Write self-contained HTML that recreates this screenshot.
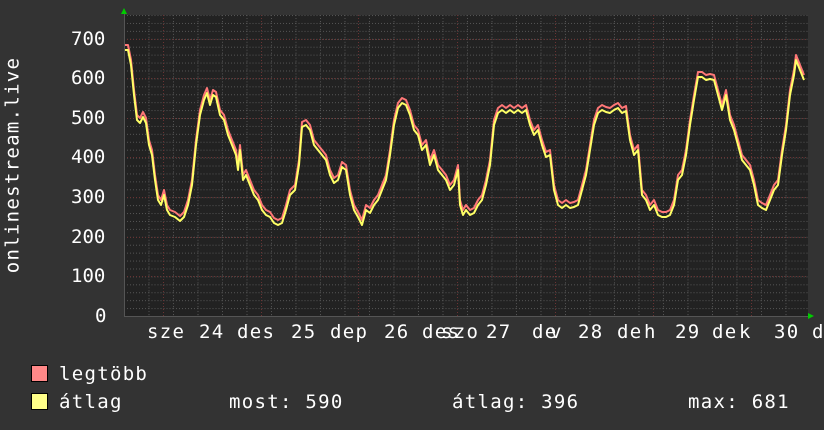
<!DOCTYPE html>
<html><head><meta charset="utf-8"><style>
body{margin:0;width:824px;height:430px;background:#333;overflow:hidden;position:relative;font-family:"DejaVu Sans Mono","Liberation Mono",monospace;color:#fff;font-size:19px;letter-spacing:1.3px}
.t{position:absolute;white-space:pre;line-height:1}
.y{letter-spacing:0}
.sq{position:absolute;width:15px;height:15px;border:1px solid #000}
</style></head><body>
<svg width="824" height="430" style="position:absolute;left:0;top:0">
<defs>
<pattern id="mn" x="124" y="316" width="24.5" height="7.92" patternUnits="userSpaceOnUse">
<path d="M0 0.5H24.5" stroke="#555" stroke-width="1" stroke-dasharray="1 2"/>
<path d="M0.5 0V7.92" stroke="#555" stroke-width="1" stroke-dasharray="1 2"/>
</pattern>
</defs>
<rect x="124" y="15" width="684" height="301" fill="#222"/>
<rect x="124" y="15" width="684" height="301" fill="url(#mn)"/>
<g stroke="#6a3333" stroke-dasharray="1 2" stroke-width="1">
<path d="M124 276.5H808M124 237.5H808M124 197.5H808M124 157.5H808M124 118.5H808M124 78.5H808M124 39.5H808"/>
<path d="M163.5 15V316M261.5 15V316M358.5 15V316M457.5 15V316M555.5 15V316M653.5 15V316M751.5 15V316"/>
</g>
<path d="M124 316.5H810M124.5 12V316" stroke="#555" stroke-width="1"/>
<polygon points="121,14 127,14 124,8" fill="#0c0"/>
<polygon points="808,313 808,319 814,316" fill="#0c0"/>
<g fill="none" stroke-width="2" stroke-linejoin="round">
<polyline stroke="#f77" points="125,45 128,45 131,60 134,90 137,115 140,118 143,112 146,118 149,140 152,150 155,175 158,195 161,200 164,190 167,205 170,210 175,212 180,216 184,212 188,200 192,180 196,140 200,110 204,95 207,88 210,100 213,90 216,92 220,110 224,115 228,130 232,140 236,150 238,165 240,145 243,175 246,170 250,180 254,190 258,195 262,205 266,210 270,212 274,218 278,220 282,218 286,205 290,190 295,185 299,160 302,122 306,120 310,125 314,140 318,145 322,150 326,155 330,170 334,178 338,175 342,162 346,165 350,190 354,205 358,212 362,220 366,205 370,208 374,200 378,195 382,185 386,175 390,150 394,120 398,103 402,98 406,100 410,110 414,125 418,130 422,145 426,140 430,160 434,150 438,165 442,170 446,175 450,185 454,180 458,165 460,200 463,210 466,205 470,210 474,208 478,200 482,195 486,180 490,160 494,120 498,108 502,105 506,108 510,105 514,108 518,105 522,108 526,105 530,120 534,130 538,125 542,140 546,152 550,150 554,185 558,200 562,203 566,200 570,203 574,202 578,200 582,185 586,170 590,145 594,120 598,108 602,105 606,107 610,108 614,105 618,103 622,108 626,106 630,135 634,150 638,145 642,190 646,195 650,205 654,200 658,210 662,212 666,212 670,210 674,200 678,175 682,170 686,150 690,120 694,95 698,72 702,72 706,75 710,74 714,75 718,90 722,105 726,90 730,115 734,125 738,140 742,155 746,160 750,165 754,180 758,200 762,203 766,205 770,195 774,185 778,180 782,150 786,125 790,90 794,70 796,55 800,65 804,75"/>
<polyline stroke="#ff6" transform="translate(0,5)" points="125,45 128,45 131,60 134,90 137,115 140,118 143,112 146,118 149,140 152,150 155,175 158,195 161,200 164,190 167,205 170,210 175,212 180,216 184,212 188,200 192,180 196,140 200,110 204,95 207,88 210,100 213,90 216,92 220,110 224,115 228,130 232,140 236,150 238,165 240,145 243,175 246,170 250,180 254,190 258,195 262,205 266,210 270,212 274,218 278,220 282,218 286,205 290,190 295,185 299,160 302,122 306,120 310,125 314,140 318,145 322,150 326,155 330,170 334,178 338,175 342,162 346,165 350,190 354,205 358,212 362,220 366,205 370,208 374,200 378,195 382,185 386,175 390,150 394,120 398,103 402,98 406,100 410,110 414,125 418,130 422,145 426,140 430,160 434,150 438,165 442,170 446,175 450,185 454,180 458,165 460,200 463,210 466,205 470,210 474,208 478,200 482,195 486,180 490,160 494,120 498,108 502,105 506,108 510,105 514,108 518,105 522,108 526,105 530,120 534,130 538,125 542,140 546,152 550,150 554,185 558,200 562,203 566,200 570,203 574,202 578,200 582,185 586,170 590,145 594,120 598,108 602,105 606,107 610,108 614,105 618,103 622,108 626,106 630,135 634,150 638,145 642,190 646,195 650,205 654,200 658,210 662,212 666,212 670,210 674,200 678,175 682,170 686,150 690,120 694,95 698,72 702,72 706,75 710,74 714,75 718,90 722,105 726,90 730,115 734,125 738,140 742,155 746,160 750,165 754,180 758,200 762,203 766,205 770,195 774,185 778,180 782,150 786,125 790,90 794,70 796,55 800,65 804,75"/>
</g>
</svg>
<div class="t" style="left:0;top:165px;width:0;height:0"><div style="position:absolute;transform:translate(-50%,-50%) rotate(-90deg);left:13px;top:0">onlinestream.live</div></div>
<div class="t y" style="left:71px;top:30px">700</div>
<div class="t y" style="left:71px;top:69px">600</div>
<div class="t y" style="left:71px;top:109px">500</div>
<div class="t y" style="left:71px;top:148px">400</div>
<div class="t y" style="left:71px;top:188px">300</div>
<div class="t y" style="left:71px;top:228px">200</div>
<div class="t y" style="left:71px;top:267px">100</div>
<div class="t y" style="left:95px;top:307px">0</div>
<div class="t" style="left:147px;top:323px">sze</div>
<div class="t" style="left:199px;top:323px">24</div>
<div class="t" style="left:237px;top:323px">des</div>
<div class="t" style="left:291px;top:323px">25</div>
<div class="t" style="left:330px;top:323px">dep</div>
<div class="t" style="left:384px;top:323px">26</div>
<div class="t" style="left:422px;top:323px">des</div>
<div class="t" style="left:441px;top:323px">szo</div>
<div class="t" style="left:486px;top:323px">27</div>
<div class="t" style="left:532px;top:323px">de</div>
<div class="t" style="left:550px;top:323px">v</div>
<div class="t" style="left:578px;top:323px">28</div>
<div class="t" style="left:617px;top:323px">de</div>
<div class="t" style="left:644px;top:323px">h</div>
<div class="t" style="left:675px;top:323px">29</div>
<div class="t" style="left:712px;top:323px">de</div>
<div class="t" style="left:739px;top:323px">k</div>
<div class="t" style="left:774px;top:323px">30</div>
<div class="t" style="left:812px;top:323px">d</div>
<div class="sq" style="left:31px;top:365px;background:#f88"></div>
<div class="sq" style="left:31px;top:393px;background:#ff8"></div>
<div class="t" style="left:59px;top:365px">legtöbb</div>
<div class="t" style="left:59px;top:393px">átlag</div>
<div class="t" style="left:229px;top:393px">most: 590</div>
<div class="t" style="left:452px;top:393px">átlag: 396</div>
<div class="t" style="left:688px;top:393px">max: 681</div>
</body></html>
